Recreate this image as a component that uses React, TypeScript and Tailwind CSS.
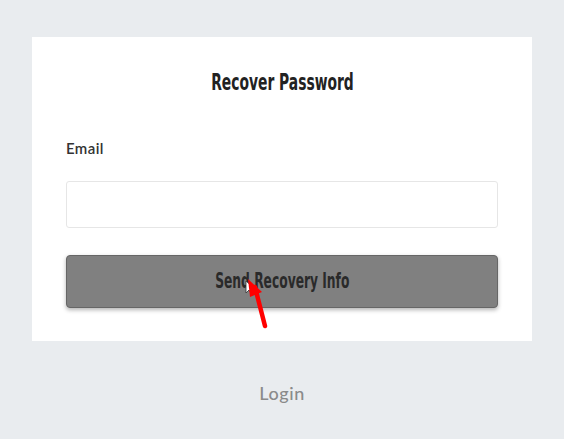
import React from "react";

const cond = { fontFamily: '"DejaVu Sans Condensed", "DejaVu Sans", sans-serif' };

export default function App() {
  return (
    <div className="w-[564px] h-[439px] bg-[#e9ecef] flex flex-col items-center pt-[37px]" style={{ fontFamily: "Lato, sans-serif" }}>
      <div className="w-[500px] h-[304px] bg-white flex flex-col px-[34px] pt-[29px] relative">
        <h1 className="flex justify-center text-[23px] leading-[32px] font-bold text-[#222]" style={cond}>
          <span className="inline-block scale-x-[0.67] whitespace-nowrap">Recover Password</span>
        </h1>
        <label className="mt-[40px] text-[15px] leading-[20px] font-semibold text-[#333] tracking-[0.4px]">Email</label>
        <div className="mt-[23px] h-[47px] border border-[#e6e6e6] rounded-[3px]" />
        <button className="mt-[27px] h-[53px] bg-[#808080] border border-[#666] rounded-[4px] shadow-[0_2px_4px_rgba(0,0,0,0.3)] flex items-center justify-center text-[21px] font-bold text-[#2a2a2a]" style={cond}>
          <span className="inline-block scale-x-[0.65] whitespace-nowrap">Send Recovery Info</span>
        </button>
        <svg className="absolute left-[208px] top-[238px]" width="40" height="56" viewBox="0 0 40 56">
          <path d="M6 6 L6 18 L9 15 L12 20 L14 19 L11 14 L15 14 Z" fill="#fff" stroke="#333" strokeWidth="0.8" />
          <path d="M25 51 L15 12" stroke="#f00" strokeWidth="4.5" strokeLinecap="round" />
          <path d="M8 4 L22 17 L10 22 Z" fill="#f00" />
        </svg>
      </div>
      <div className="mt-[40px] text-[18px] leading-[24px] text-[#8a8a8a] font-medium tracking-[0.6px]">Login</div>
    </div>
  );
}
